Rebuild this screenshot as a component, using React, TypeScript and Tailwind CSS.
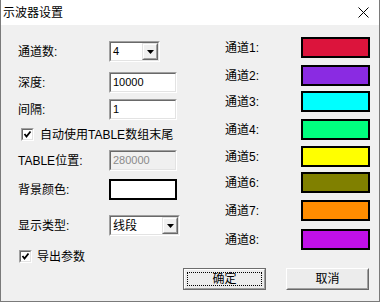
import React from "react";

const channels = [
  { n: 1, color: "bg-[#dc143c]", mt: "mt-[12px]" },
  { n: 2, color: "bg-[#8a2be2]", mt: "mt-[7px]" },
  { n: 3, color: "bg-[#00ffff]", mt: "mt-[5px]" },
  { n: 4, color: "bg-[#00ff7f]", mt: "mt-[7px]" },
  { n: 5, color: "bg-[#ffff00]", mt: "mt-[6px]" },
  { n: 6, color: "bg-[#808000]", mt: "mt-[5px]" },
  { n: 7, color: "bg-[#ff8c00]", mt: "mt-[7px]" },
  { n: 8, color: "bg-[#c010e8]", mt: "mt-[8px]" },
];

function Sunken({ className, inner, children }: { className: string; inner?: string; children?: React.ReactNode }) {
  return (
    <div className={`h-[21px] border border-t-[#a0a0a0] border-l-[#a0a0a0] border-r-white border-b-white ${className}`}>
      <div className={`h-full flex items-center border border-t-[#696969] border-l-[#696969] border-r-[#e3e3e3] border-b-[#e3e3e3] ${inner ?? "bg-white"}`}>
        {children}
      </div>
    </div>
  );
}

function DropButton() {
  return (
    <div className="ml-auto w-[16px] h-full border border-t-[#e3e3e3] border-l-[#e3e3e3] border-r-[#696969] border-b-[#696969] bg-[#f0f0f0]">
      <div className="h-full flex items-center justify-center border border-t-white border-l-white border-r-[#a0a0a0] border-b-[#a0a0a0]">
        <svg width="7" height="4" viewBox="0 0 7 4">
          <polygon points="0,0 7,0 3.5,4" fill="#000" />
        </svg>
      </div>
    </div>
  );
}

function Check() {
  return (
    <div className="w-[13px] h-[13px] border border-t-[#a0a0a0] border-l-[#a0a0a0] border-r-white border-b-white">
      <div className="w-full h-full bg-white border border-t-[#696969] border-l-[#696969] border-r-[#e3e3e3] border-b-[#e3e3e3]">
        <svg width="9" height="9" viewBox="0 0 9 9">
          <polyline points="1.5,4 3.5,6.5 7.5,1.5" fill="none" stroke="#000" strokeWidth="1.8" />
        </svg>
      </div>
    </div>
  );
}

export default function App() {
  return (
    <div className="w-[380px] h-[303px] bg-white font-['Liberation_Sans','Noto_Sans_CJK_SC',sans-serif] text-[12px] leading-none text-black">
      <div className="w-[380px] h-[302px] flex flex-col bg-[#f0f0f0] border-l border-r border-b border-[#7a7a7a]">
        <div className="h-[25px] bg-white flex items-center pl-[2px] pr-[10px]">
          <span className="mt-[1px]">示波器设置</span>
          <svg className="ml-auto" width="11" height="11" viewBox="0 0 11 11">
            <path d="M0.5 0.5 L10.5 10.5 M10.5 0.5 L0.5 10.5" stroke="#000" strokeWidth="1" />
          </svg>
        </div>

        <div className="flex">
          <div className="w-[224px] pl-[17px] flex flex-col">
            <div className="mt-[16px] flex items-center">
              <span className="w-[91px]">通道数:</span>
              <Sunken className="w-[51px]">
                <span className="pl-[2px] text-[11px]">4</span>
                <DropButton />
              </Sunken>
            </div>
            <div className="mt-[10px] flex items-center">
              <span className="w-[91px]">深度:</span>
              <Sunken className="w-[68px]">
                <span className="pl-[2px] text-[11px]">10000</span>
              </Sunken>
            </div>
            <div className="mt-[6px] flex items-center">
              <span className="w-[91px]">间隔:</span>
              <Sunken className="w-[68px]">
                <span className="pl-[2px] text-[11px]">1</span>
              </Sunken>
            </div>
            <div className="mt-[8px] h-[13px] flex items-center pl-[3px] gap-[6px]">
              <Check />
              <span>自动使用TABLE数组末尾</span>
            </div>
            <div className="mt-[9px] flex items-center">
              <span className="w-[91px]">TABLE位置:</span>
              <Sunken className="w-[68px]" inner="bg-[#f0f0f0]">
                <span className="pl-[2px] text-[11px] text-[#8a8a8a]">280000</span>
              </Sunken>
            </div>
            <div className="mt-[8px] flex items-center">
              <span className="w-[91px]">背景颜色:</span>
              <div className="w-[68px] h-[21px] border-2 border-black bg-white" />
            </div>
            <div className="mt-[15px] flex items-center">
              <span className="w-[91px]">显示类型:</span>
              <Sunken className="w-[71px]">
                <span className="pl-[2px]">线段</span>
                <DropButton />
              </Sunken>
            </div>
            <div className="mt-[14px] h-[13px] flex items-center pl-[1px] gap-[5px]">
              <Check />
              <span>导出参数</span>
            </div>
          </div>

          <div className="flex flex-col">
            {channels.map((ch) => (
              <div key={ch.n} className={`${ch.mt} flex items-center`}>
                <span className="w-[76px]">通道{ch.n}:</span>
                <div className={`w-[69px] h-[21px] border-2 border-black ${ch.color}`} />
              </div>
            ))}
          </div>
        </div>

        <div className="mt-[5px] flex pl-[182px] gap-[20px]">
          <div className="w-[83px] h-[22px] border border-[#6d6d6d] bg-[#ececec]">
            <div className="h-full p-[2px] border border-t-white border-l-white border-r-[#a0a0a0] border-b-[#a0a0a0]">
              <div className="h-full flex items-center justify-center border border-dotted border-black">确定</div>
            </div>
          </div>
          <div className="w-[83px] h-[22px] border border-t-white border-l-white border-r-[#696969] border-b-[#696969] bg-[#ececec]">
            <div className="h-full flex items-center justify-center border border-t-[#ececec] border-l-[#ececec] border-r-[#a0a0a0] border-b-[#a0a0a0]">
              取消
            </div>
          </div>
        </div>
      </div>
    </div>
  );
}
